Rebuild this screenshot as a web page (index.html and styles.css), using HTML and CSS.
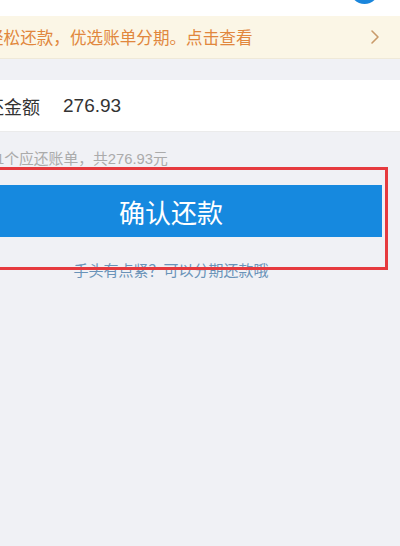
FILE: index.html
```html
<!DOCTYPE html>
<html lang="zh-CN">
<head>
<meta charset="utf-8">
<title>确认还款</title>
<link rel="stylesheet" href="styles.css">
</head>
<body>
<div class="page">
  <div class="top"><span class="dot"></span></div>
  <div class="banner">
    <span class="banner-text">轻松还款，优选账单分期。点击查看</span>
    <svg class="chev" width="10" height="16" viewBox="0 0 10 16"><path d="M2 2 L8 8 L2 14" fill="none" stroke="#c99a6a" stroke-width="1.6" stroke-linecap="round" stroke-linejoin="round"/></svg>
  </div>
  <div class="gap"></div>
  <div class="row">
    <span class="label">应还金额</span>
    <span class="amount">276.93</span>
  </div>
  <div class="hint">1个应还账单，共276.93元</div>
  <div class="btn">确认还款</div>
  <div class="link">手头有点紧？可以分期还款哦</div>
  <div class="mark"></div>
</div>
</body>
</html>
```
FILE: styles.css
```css
html, body {
  margin: 0;
  padding: 0;
  background: #f0f1f5;
  overflow: hidden;
  width: 400px;
  height: 546px;
}
.page {
  position: relative;
  margin-left: -40px;
  width: 440px;
  font-family: "Liberation Sans", "Noto Sans CJK SC", sans-serif;
}
.top {
  height: 16px;
  background: #ffffff;
  position: relative;
  overflow: hidden;
}
.dot {
  position: absolute;
  left: 390px;
  top: -25px;
  width: 29px;
  height: 29px;
  border-radius: 50%;
  background: #1a86dc;
}
.banner {
  height: 42px;
  background: #fbf6e6;
  display: flex;
  align-items: center;
  justify-content: space-between;
  padding: 0 20px 0 27px;
  border-bottom: 1px solid #efe9d8;
}
.banner-text {
  font-size: 16.6px;
  color: #e1873d;
  white-space: nowrap;
}
.chev {
  display: block;
}
.gap {
  height: 21px;
}
.row {
  height: 52px;
  background: #ffffff;
  display: flex;
  align-items: center;
  padding-left: 8px;
  border-bottom: 1px solid #ebebeb;
  box-sizing: border-box;
}
.label {
  font-size: 18px;
  color: #333333;
}
.amount {
  font-size: 19px;
  color: #333333;
  margin-left: 23px;
}
.hint {
  height: 50px;
  display: flex;
  align-items: center;
  padding-left: 36px;
  font-size: 14.8px;
  color: #ababab;
  white-space: nowrap;
}
.btn {
  margin: 3px 18px 0 0;
  height: 52px;
  background: #1689df;
  color: #ffffff;
  font-size: 26px;
  display: flex;
  align-items: center;
  justify-content: center;
}
.link {
  margin: 24px 18px 0 0;
  height: 20px;
  line-height: 20px;
  text-align: center;
  font-size: 15px;
  color: #6a93b8;
}
.mark {
  position: absolute;
  left: 20px;
  top: 167px;
  width: 408px;
  height: 103px;
  box-sizing: border-box;
  border: 3px solid #e63a3e;
}
```
